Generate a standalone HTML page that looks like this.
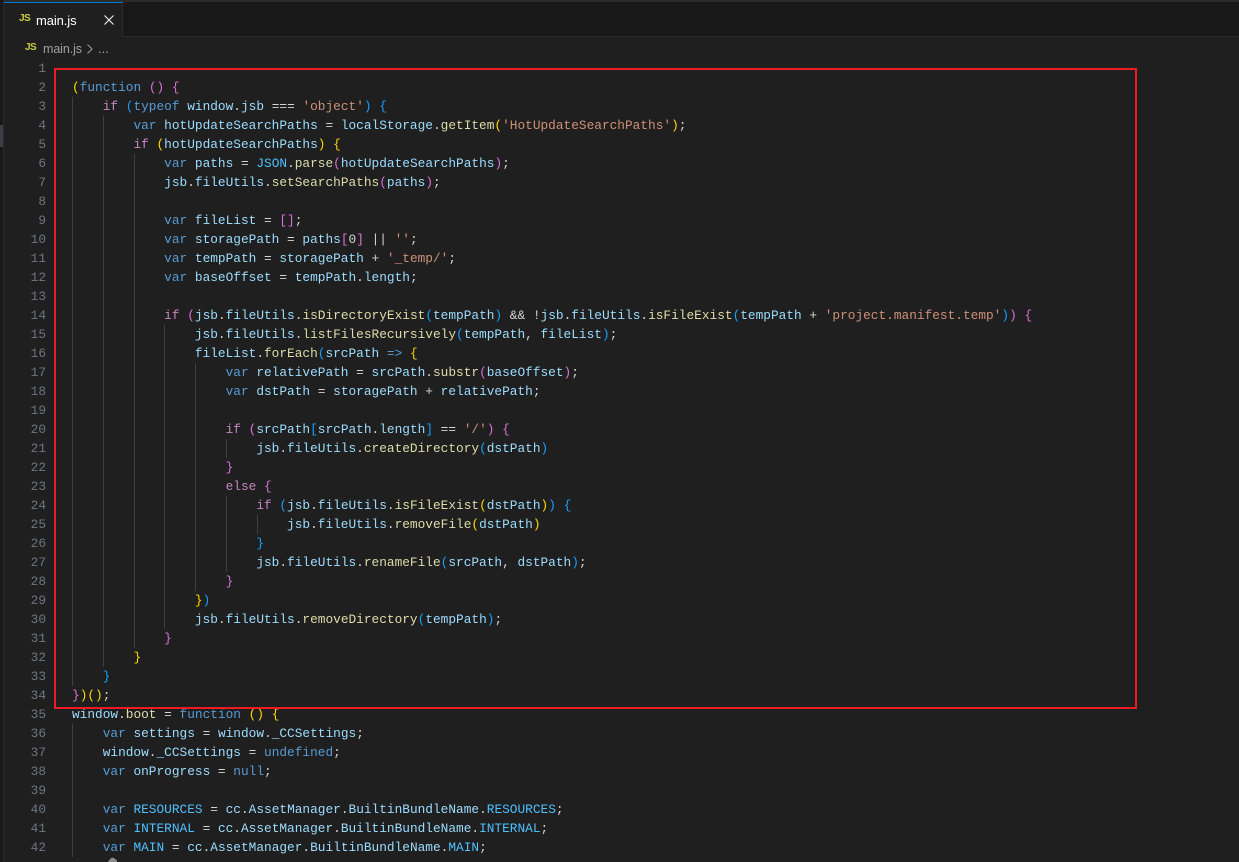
<!DOCTYPE html>
<html>
<head>
<meta charset="utf-8">
<style>
html,body{margin:0;padding:0;background:#1f1f1f;}
#root{position:relative;width:1239px;height:862px;overflow:hidden;background:#1f1f1f;}
.abs{position:absolute;}
#tabbar{left:0;top:0;width:1239px;height:36px;background:#181818;border-bottom:1px solid #2b2b2b;}
#topline{left:0;top:0;width:1239px;height:2px;background:#2b2b2b;}
#tab{left:4px;top:2px;width:119px;height:35px;background:#1f1f1f;border-right:1px solid #2b2b2b;box-sizing:border-box;}
#tabtop{left:4px;top:2px;width:119px;height:1px;background:#0078d4;}
#leftstrip{left:0;top:0;width:4px;height:862px;background:#181818;border-right:1px solid #2b2b2b;box-sizing:border-box;}
#thumb{left:0;top:125px;width:3px;height:22px;background:#3c3c47;}
.ui{font-family:"Liberation Sans",sans-serif;font-size:13px;line-height:16px;white-space:pre;}
.js{font-family:"Liberation Sans",sans-serif;font-weight:bold;font-size:10px;letter-spacing:-0.6px;line-height:12px;color:#cbcb41;}
pre{margin:0;font-family:"Liberation Mono",monospace;font-size:12.8px;line-height:19px;}
#nums{left:0;top:59px;width:46px;text-align:right;color:#6e7681;}
#code{left:72px;top:78px;color:#d4d4d4;}
.g{position:absolute;width:1px;background:#404040;}
#box{left:54px;top:68px;width:1083px;height:641px;border:2px solid #ed1c24;box-sizing:border-box;}
.k{color:#569cd6}.c{color:#c586c0}.v{color:#9cdcfe}.f{color:#dcdcaa}.s{color:#ce9178}.n{color:#4fc1ff}
.y{color:#ffd700}.p{color:#da70d6}.b{color:#179fff}
</style>
</head>
<body>
<div id="root">
<div class="abs" id="tabbar"></div>
<div class="abs" id="topline"></div>
<div class="abs" id="tab"></div>
<div class="abs" id="tabtop"></div>
<div class="abs" id="leftstrip"></div>
<div class="abs" id="thumb"></div>
<div class="abs js" style="left:19px;top:13px;">JS</div>
<div class="abs ui" style="left:36px;top:13px;color:#ffffff;letter-spacing:-0.1px;">main.js</div>
<svg class="abs" style="left:103px;top:14px;" width="12" height="12" viewBox="0 0 12 12"><path d="M1.5 1.5L10.5 10.5M10.5 1.5L1.5 10.5" stroke="#e8e8e8" stroke-width="1.2" fill="none"/></svg>
<div class="abs js" style="left:25px;top:42px;">JS</div>
<div class="abs ui" style="left:43px;top:41px;color:#a0a0a0;font-size:12.5px;letter-spacing:-0.1px;">main.js</div>
<svg class="abs" style="left:86px;top:43px;" width="8" height="12" viewBox="0 0 8 12"><path d="M1.5 1.5L6 6L1.5 10.5" stroke="#a0a0a0" stroke-width="1" fill="none"/></svg>
<div class="abs ui" style="left:98px;top:41px;color:#a0a0a0;">...</div>

<div class="g" style="left:72px;top:97px;height:589px;"></div>
<div class="g" style="left:103px;top:116px;height:551px;"></div>
<div class="g" style="left:134px;top:154px;height:494px;"></div>
<div class="g" style="left:164px;top:325px;height:304px;"></div>
<div class="g" style="left:195px;top:363px;height:228px;"></div>
<div class="g" style="left:226px;top:439px;height:19px;"></div>
<div class="g" style="left:226px;top:496px;height:76px;"></div>
<div class="g" style="left:257px;top:515px;height:19px;"></div>
<div class="g" style="left:72px;top:724px;height:133px;"></div>

<pre class="abs" id="nums">1
2
3
4
5
6
7
8
9
10
11
12
13
14
15
16
17
18
19
20
21
22
23
24
25
26
27
28
29
30
31
32
33
34
35
36
37
38
39
40
41
42</pre>

<pre class="abs" id="code"><span class="y">(</span><span class="k">function</span> <span class="p">()</span> <span class="p">{</span>
    <span class="c">if</span> <span class="b">(</span><span class="k">typeof</span> <span class="v">window</span>.<span class="v">jsb</span> === <span class="s">'object'</span><span class="b">)</span> <span class="b">{</span>
        <span class="k">var</span> <span class="v">hotUpdateSearchPaths</span> = <span class="v">localStorage</span>.<span class="f">getItem</span><span class="y">(</span><span class="s">'HotUpdateSearchPaths'</span><span class="y">)</span>;
        <span class="c">if</span> <span class="y">(</span><span class="v">hotUpdateSearchPaths</span><span class="y">)</span> <span class="y">{</span>
            <span class="k">var</span> <span class="v">paths</span> = <span class="n">JSON</span>.<span class="f">parse</span><span class="p">(</span><span class="v">hotUpdateSearchPaths</span><span class="p">)</span>;
            <span class="v">jsb</span>.<span class="v">fileUtils</span>.<span class="f">setSearchPaths</span><span class="p">(</span><span class="v">paths</span><span class="p">)</span>;

            <span class="k">var</span> <span class="v">fileList</span> = <span class="p">[]</span>;
            <span class="k">var</span> <span class="v">storagePath</span> = <span class="v">paths</span><span class="p">[</span>0<span class="p">]</span> || <span class="s">''</span>;
            <span class="k">var</span> <span class="v">tempPath</span> = <span class="v">storagePath</span> + <span class="s">'_temp/'</span>;
            <span class="k">var</span> <span class="v">baseOffset</span> = <span class="v">tempPath</span>.<span class="v">length</span>;

            <span class="c">if</span> <span class="p">(</span><span class="v">jsb</span>.<span class="v">fileUtils</span>.<span class="f">isDirectoryExist</span><span class="b">(</span><span class="v">tempPath</span><span class="b">)</span> &amp;&amp; !<span class="v">jsb</span>.<span class="v">fileUtils</span>.<span class="f">isFileExist</span><span class="b">(</span><span class="v">tempPath</span> + <span class="s">'project.manifest.temp'</span><span class="b">)</span><span class="p">)</span> <span class="p">{</span>
                <span class="v">jsb</span>.<span class="v">fileUtils</span>.<span class="f">listFilesRecursively</span><span class="b">(</span><span class="v">tempPath</span>, <span class="v">fileList</span><span class="b">)</span>;
                <span class="v">fileList</span>.<span class="f">forEach</span><span class="b">(</span><span class="v">srcPath</span> <span class="k">=&gt;</span> <span class="y">{</span>
                    <span class="k">var</span> <span class="v">relativePath</span> = <span class="v">srcPath</span>.<span class="f">substr</span><span class="p">(</span><span class="v">baseOffset</span><span class="p">)</span>;
                    <span class="k">var</span> <span class="v">dstPath</span> = <span class="v">storagePath</span> + <span class="v">relativePath</span>;

                    <span class="c">if</span> <span class="p">(</span><span class="v">srcPath</span><span class="b">[</span><span class="v">srcPath</span>.<span class="v">length</span><span class="b">]</span> == <span class="s">'/'</span><span class="p">)</span> <span class="p">{</span>
                        <span class="v">jsb</span>.<span class="v">fileUtils</span>.<span class="f">createDirectory</span><span class="b">(</span><span class="v">dstPath</span><span class="b">)</span>
                    <span class="p">}</span>
                    <span class="c">else</span> <span class="p">{</span>
                        <span class="c">if</span> <span class="b">(</span><span class="v">jsb</span>.<span class="v">fileUtils</span>.<span class="f">isFileExist</span><span class="y">(</span><span class="v">dstPath</span><span class="y">)</span><span class="b">)</span> <span class="b">{</span>
                            <span class="v">jsb</span>.<span class="v">fileUtils</span>.<span class="f">removeFile</span><span class="y">(</span><span class="v">dstPath</span><span class="y">)</span>
                        <span class="b">}</span>
                        <span class="v">jsb</span>.<span class="v">fileUtils</span>.<span class="f">renameFile</span><span class="b">(</span><span class="v">srcPath</span>, <span class="v">dstPath</span><span class="b">)</span>;
                    <span class="p">}</span>
                <span class="y">}</span><span class="b">)</span>
                <span class="v">jsb</span>.<span class="v">fileUtils</span>.<span class="f">removeDirectory</span><span class="b">(</span><span class="v">tempPath</span><span class="b">)</span>;
            <span class="p">}</span>
        <span class="y">}</span>
    <span class="b">}</span>
<span class="p">}</span><span class="y">)()</span>;
<span class="v">window</span>.<span class="f">boot</span> = <span class="k">function</span> <span class="y">()</span> <span class="y">{</span>
    <span class="k">var</span> <span class="v">settings</span> = <span class="v">window</span>.<span class="v">_CCSettings</span>;
    <span class="v">window</span>.<span class="v">_CCSettings</span> = <span class="k">undefined</span>;
    <span class="k">var</span> <span class="v">onProgress</span> = <span class="k">null</span>;

    <span class="k">var</span> <span class="n">RESOURCES</span> = <span class="v">cc</span>.<span class="v">AssetManager</span>.<span class="v">BuiltinBundleName</span>.<span class="n">RESOURCES</span>;
    <span class="k">var</span> <span class="n">INTERNAL</span> = <span class="v">cc</span>.<span class="v">AssetManager</span>.<span class="v">BuiltinBundleName</span>.<span class="n">INTERNAL</span>;
    <span class="k">var</span> <span class="n">MAIN</span> = <span class="v">cc</span>.<span class="v">AssetManager</span>.<span class="v">BuiltinBundleName</span>.<span class="n">MAIN</span>;</pre>

<div class="abs" id="box"></div>
<svg class="abs" style="left:107px;top:857px;" width="11" height="5" viewBox="0 0 11 5"><path d="M1 5L3 2L5 0.5L7 1L10 3.5V5Z" fill="#8a8a8a"/></svg>
</div>
</body>
</html>
